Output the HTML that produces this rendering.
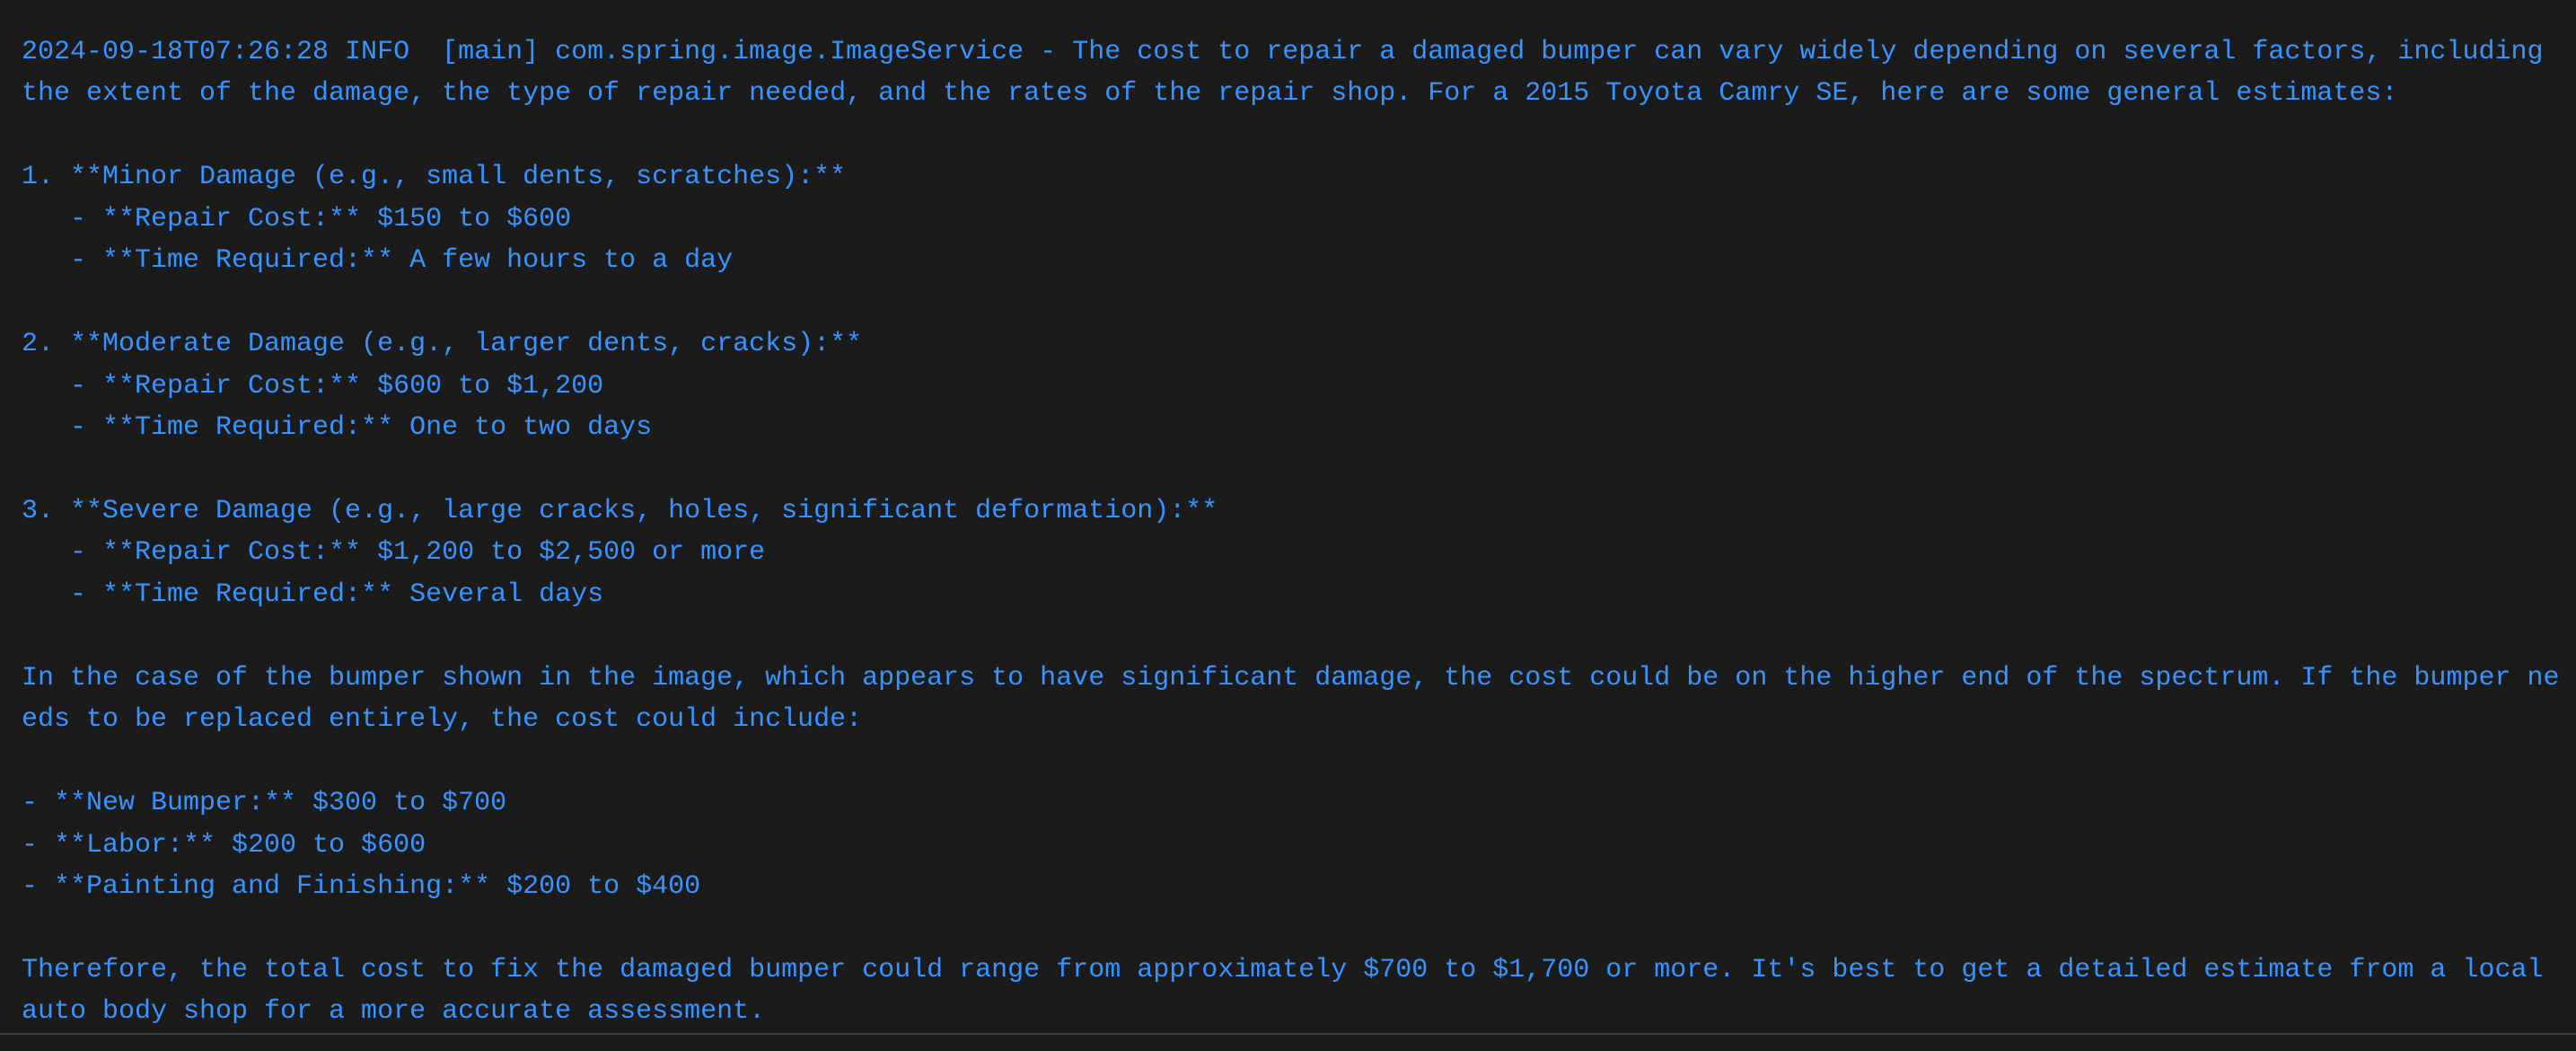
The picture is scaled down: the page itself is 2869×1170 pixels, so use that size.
<!DOCTYPE html>
<html><head><meta charset="utf-8"><style>
html,body{margin:0;padding:0;background:#1b1b1b;width:2869px;height:1170px;overflow:hidden}
pre{position:absolute;left:24px;top:35px;margin:0;font-family:"Liberation Mono",monospace;font-size:30px;line-height:46.46px;color:#3794ff;white-space:pre}
.b{position:absolute;left:0;top:1150px;width:2869px;height:2px;background:#404040}
</style></head><body>
<pre>2024-09-18T07:26:28 INFO  [main] com.spring.image.ImageService - The cost to repair a damaged bumper can vary widely depending on several factors, including
the extent of the damage, the type of repair needed, and the rates of the repair shop. For a 2015 Toyota Camry SE, here are some general estimates:

1. **Minor Damage (e.g., small dents, scratches):**
   - **Repair Cost:** $150 to $600
   - **Time Required:** A few hours to a day

2. **Moderate Damage (e.g., larger dents, cracks):**
   - **Repair Cost:** $600 to $1,200
   - **Time Required:** One to two days

3. **Severe Damage (e.g., large cracks, holes, significant deformation):**
   - **Repair Cost:** $1,200 to $2,500 or more
   - **Time Required:** Several days

In the case of the bumper shown in the image, which appears to have significant damage, the cost could be on the higher end of the spectrum. If the bumper ne
eds to be replaced entirely, the cost could include:

- **New Bumper:** $300 to $700
- **Labor:** $200 to $600
- **Painting and Finishing:** $200 to $400

Therefore, the total cost to fix the damaged bumper could range from approximately $700 to $1,700 or more. It's best to get a detailed estimate from a local
auto body shop for a more accurate assessment.</pre>
<div class="b"></div>
</body></html>
